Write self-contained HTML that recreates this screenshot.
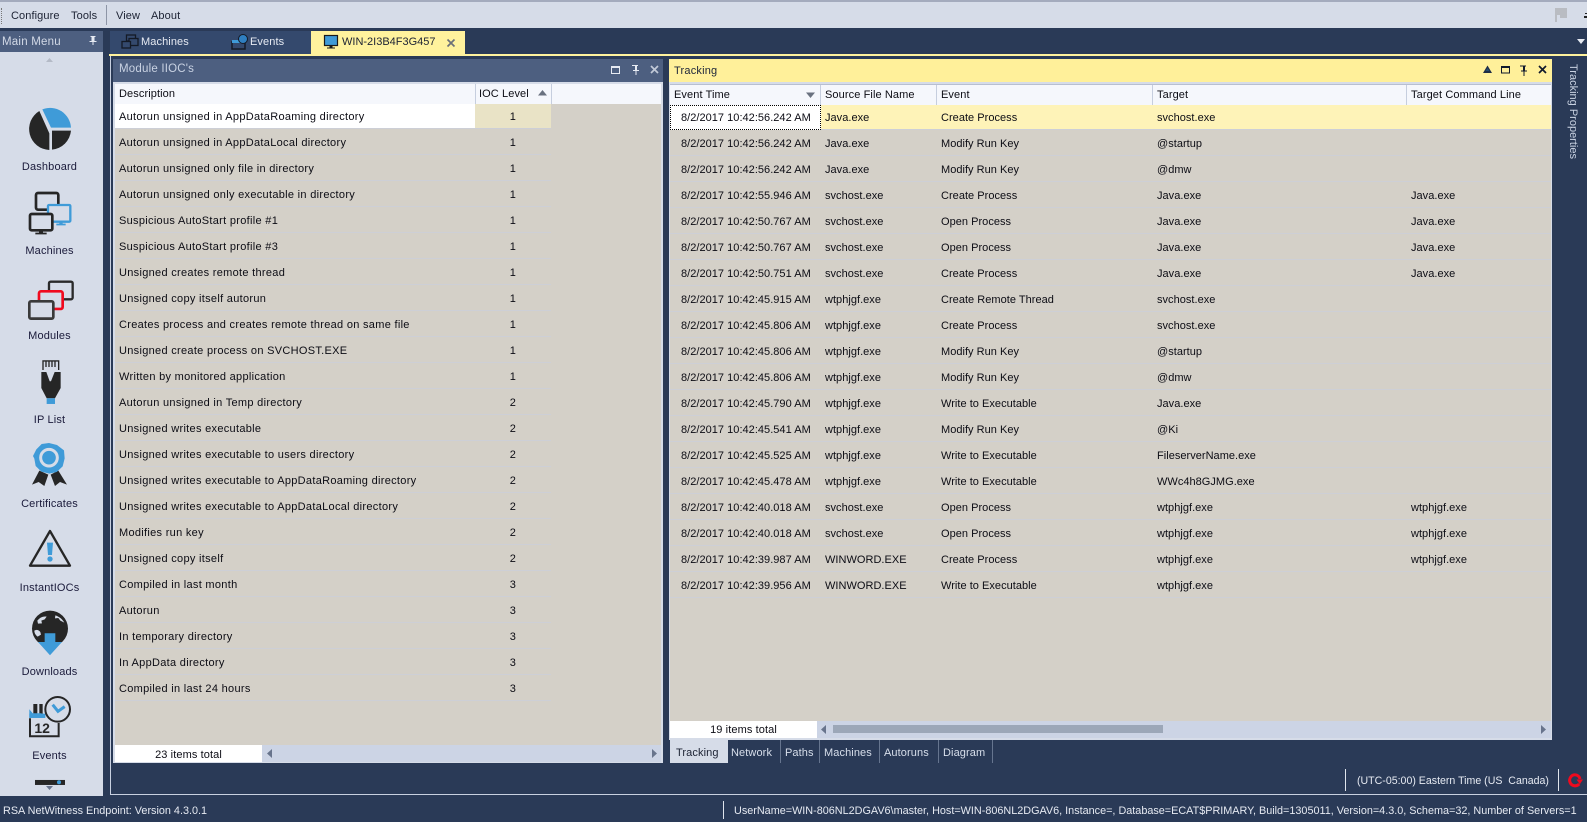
<!DOCTYPE html>
<html><head><meta charset="utf-8"><style>
html,body{margin:0;padding:0;width:1587px;height:822px;overflow:hidden;background:#2a3a57}
body{position:relative;font:11px "Liberation Sans",sans-serif;letter-spacing:.1px;color:#0c0c14}
.a,.a *{box-sizing:border-box}
.a{position:absolute;white-space:nowrap}
.wt{color:#e6eaf2}
.r{position:relative;height:26px;line-height:25px;border-bottom:1px solid #cdcfd6;white-space:nowrap}
.r span{position:absolute;top:2px}
.r:first-child span{top:1px}
.l{letter-spacing:.3px}
.t{letter-spacing:.03px}
.l .r{width:436px}
.l .d{left:4px}
.l .n{left:360px;width:76px;text-align:center}
.t .r span:nth-child(1){left:11px}
.t .r span:nth-child(2){left:155px}
.t .r span:nth-child(3){left:271px}
.t .r span:nth-child(4){left:487px}
.t .r span:nth-child(5){left:741px}
.h{position:absolute;background:#f5f7fc;border-bottom:2px solid #c6cede;height:21px;line-height:18px}
.h i{position:absolute;top:0;bottom:0;width:1px;background:#c6cede}
.h b{font-weight:normal;position:absolute;top:2px}
.sl{position:absolute;left:0;width:99px;text-align:center;color:#1a1a3a;letter-spacing:.15px}
.bt{position:absolute;top:742px;height:23px;line-height:22px;color:#d8dfeb}
.bs{position:absolute;top:740px;height:23px;width:1px;background:#66758f}
</style></head><body>

<!-- menu bar -->
<div class="a" style="left:0;top:0;width:1587px;height:28px;background:#d6dce8;border-top:2px solid #a4abbd"></div>
<div class="a" style="left:1px;top:8px;height:16px;border-left:1px dotted #777"></div>
<div class="a" style="left:11px;top:10px;color:#1c2233">Configure</div>
<div class="a" style="left:71px;top:10px;color:#1c2233">Tools</div>
<div class="a" style="left:106px;top:5px;width:1px;height:20px;background:#8d95a6"></div>
<div class="a" style="left:116px;top:10px;color:#1c2233">View</div>
<div class="a" style="left:151px;top:10px;color:#1c2233">About</div>
<svg class="a" style="left:1552px;top:6px" width="35" height="18"><path d="M3 2h2v14H3zM5 2h10v10H8V9H5z" fill="#b9bcc2"/><path d="M33 7h2v1h-2zM32 10h3v2h-3z" fill="#222"/></svg>

<!-- sidebar -->
<div class="a" style="left:0;top:31px;width:103px;height:21px;background:#4d5f80;color:#d2d9e6;line-height:22px;padding-left:2px;font-size:11.500px;letter-spacing:.22px">Main Menu</div>
<svg class="a" style="left:88px;top:35px" width="10" height="11"><path d="M2.500 1h5v1h-1v4h2v1H5.500v3h-1V7H1.500V6h2V2h-1z" fill="#e6eaf2"/></svg>
<div class="a" style="left:0;top:52px;width:103px;height:744px;background:#d6dce8"></div>
<svg class="a" style="left:0;top:0" width="103" height="796" viewBox="0 0 103 796">
<path d="M46 62h7l-3.500-4z" fill="#b4bac6"/>
<path d="M46 786h7l-3.500 4z" fill="#68748c"/>
<g transform="translate(0,90) scale(.3333)">
 <path d="M118 63L148 130V180A63 63 0 0 1 118 63Z" fill="#262626"/>
 <path d="M127 58A63 63 0 0 1 213 113H153Z" fill="#3f9bd8"/>
 <path d="M156 122H213A63 63 0 0 1 156 179Z" fill="#262626"/>
 <rect x="108" y="309" width="67" height="50" rx="6" fill="none" stroke="#262626" stroke-width="8"/>
 <rect x="144" y="345" width="67" height="50" rx="3" fill="#d6dce8" stroke="#3f9bd8" stroke-width="7"/>
 <path d="M178 395h10v6h9v5h-28v-5h9z" fill="#3f9bd8"/>
 <rect x="90" y="372" width="67" height="49" rx="5" fill="#d6dce8" stroke="#262626" stroke-width="8"/>
 <path d="M117 422h12v6h11v5h-34v-5h11z" fill="#262626"/>
 <rect x="147" y="575" width="71" height="53" rx="5" fill="none" stroke="#2a2a2a" stroke-width="7"/>
 <rect x="117" y="604" width="71" height="53" rx="6" fill="#d6dce8" stroke="#f00a1e" stroke-width="8"/>
 <rect x="88" y="634" width="72" height="52" rx="5" fill="#d6dce8" stroke="#3a3a3a" stroke-width="8"/>
 <path d="M129 840V813h47v27M138 813v18M147 813v18M156 813v18M165 813v18" fill="none" stroke="#262626" stroke-width="4"/>
 <path d="M124 846h15l10 28 4 0 11-28h18v48l-17 31h-25l-16-31z" fill="#262626"/>
 <rect x="140" y="925" width="25" height="17" fill="#3f9bd8"/>
</g>
<g transform="translate(0,420) scale(.3333)">
 <path d="M118 152L96 194l20-8 17 12 12-34zM175 152l26 42-21-8-15 12-13-34z" fill="#262626"/>
 <path d="M125 72l22 -3 24 6 21 16 2 24-6 24-18 17-22 5-24-6-17-17-4-22-4-8 10-20z" fill="#3f9bd8"/>
 <circle cx="147" cy="113" r="25" fill="#3f9bd8" stroke="#d6dce8" stroke-width="9"/>
 <path d="M150 333L210 437H90Z" fill="none" stroke="#262626" stroke-width="7" stroke-linejoin="round"/>
 <path d="M141 368h18l-3 37h-12z" fill="#3f9bd8"/><circle cx="150" cy="417" r="8" fill="#3f9bd8"/>
 <circle cx="150" cy="626" r="54" fill="#262626"/>
 <path d="M112 602c8-10 18-14 28-12l-6 8-10 4 2 8-12 1zM166 586c12 4 22 12 27 22l-12-6-6-8-10 1zM103 632c6-4 12-3 18 4l2 8-10 6c-7-5-10-11-10-18z" fill="#d6dce8"/>
 <path d="M134 640h32v26h20l-36 40-36-40h20z" fill="#3f9bd8"/>
 <path d="M100 852h12v30h-12zM118 852h10v30h-10z" fill="#262626"/>
 <path d="M88 893V868l10 12h26l10 13z" fill="#3f9bd8"/>
 <path d="M90 895v54h86v-40" fill="none" stroke="#262626" stroke-width="6"/>
 <rect x="88" y="881" width="48" height="13" fill="#3f9bd8"/>
 <text x="103" y="939" font-family="Liberation Sans,sans-serif" font-size="42" font-weight="bold" fill="#262626" letter-spacing="0">12</text>
 <circle cx="173" cy="868" r="37" fill="#d6dce8" stroke="#262626" stroke-width="6"/>
 <path d="M158 854L174 874L194 860" fill="none" stroke="#3f9bd8" stroke-width="9"/>
 <rect x="105" y="1080" width="90" height="15" fill="#262626"/>
 <circle cx="177" cy="1087" r="6" fill="#3f9bd8"/>
</g>
</svg>
<div class="sl" style="top:161px">Dashboard</div>
<div class="sl" style="top:245px">Machines</div>
<div class="sl" style="top:330px">Modules</div>
<div class="sl" style="top:414px">IP List</div>
<div class="sl" style="top:498px">Certificates</div>
<div class="sl" style="top:582px">InstantIOCs</div>
<div class="sl" style="top:666px">Downloads</div>
<div class="sl" style="top:750px">Events</div>

<!-- doc tabs -->
<div class="a" style="left:110px;top:31px;width:201px;height:23px;background:#34496d"></div>
<svg class="a" style="left:121px;top:34px" width="18" height="16"><g fill="none" stroke="#141a26" stroke-width="1.300"><rect x="5.500" y="1" width="9" height="6"/><rect x="8" y="4.500" width="9" height="7" fill="#34496d"/><rect x="1" y="7.500" width="8.500" height="6.500" fill="#34496d"/></g></svg>
<div class="a wt" style="left:141px;top:36px">Machines</div>
<svg class="a" style="left:231px;top:34px" width="18" height="16"><rect x="1" y="8" width="13" height="7" fill="none" stroke="#141a26" stroke-width="1.500"/><rect x="1" y="6" width="8" height="3" fill="#3f9bd8"/><circle cx="12" cy="5" r="4.500" fill="#2f7fc0" stroke="#141a26"/></svg>
<div class="a wt" style="left:250px;top:36px">Events</div>
<div class="a" style="left:311px;top:31px;width:154px;height:23px;background:#fff29d"></div>
<svg class="a" style="left:323px;top:34px" width="16" height="16"><rect x="1.500" y="1.500" width="13" height="10" fill="#3f9bd8" stroke="#1a1a1a" stroke-width="1.200"/><path d="M6.500 12h3v1.500h2.500v1H4v-1h2.500z" fill="#1a1a1a"/></svg>
<div class="a" style="left:342px;top:36px;color:#1c2233;letter-spacing:0">WIN-2I3B4F3G457</div>
<svg class="a" style="left:446px;top:38px" width="11" height="11"><path d="M1.500 1.500l7 7M8.500 1.500l-7 7" stroke="#6c7078" stroke-width="1.700"/></svg>
<div class="a" style="left:109px;top:54px;width:1478px;height:2px;background:#fff29d"></div>
<svg class="a" style="left:1576px;top:38px" width="10" height="8"><path d="M1 1h8L5 6z" fill="#e6eaf2"/></svg>

<!-- Module IIOC panel -->
<div class="a" style="left:113px;top:59px;width:550px;height:704px;background:#d6dce8"></div>
<div class="a" style="left:113px;top:59px;width:550px;height:23px;background:#4d5f80;color:#c9d2e2;line-height:21px;padding-left:6px;font-size:11.500px;letter-spacing:.2px">Module IIOC's</div>
<svg class="a" style="left:608px;top:60px" width="52" height="20"><rect x="3.500" y="6.500" width="8" height="7" fill="none" stroke="#e6eaf2"/><rect x="3" y="6" width="9" height="2" fill="#e6eaf2"/><path d="M24 5h6v1h-1v4h2v1h-2.500v4h-1v-4H25v-1h2V6h-3z" fill="#e6eaf2"/><path d="M43 6l7 7M50 6l-7 7" stroke="#c2cad8" stroke-width="1.700"/></svg>
<div class="h" style="left:115px;top:84px;width:546px;height:20px;line-height:17px">
 <b style="left:4px">Description</b><i style="left:360px"></i><b style="left:364px">IOC Level</b><i style="left:436px"></i>
 <svg style="position:absolute;left:423px;top:5px" width="10" height="7"><path d="M0 6.500h9L4.500 1z" fill="#6a7280"/></svg>
</div>
<div class="a l" style="left:115px;top:104px;width:546px;height:641px;background:#d4d0c8">
<div class="r" style="height:25px;background:linear-gradient(90deg,#fff 360px,#e9e3c6 360px)"><span class="d">Autorun unsigned in AppDataRoaming directory</span><span class="n">1</span></div>
<div class="r"><span class="d">Autorun unsigned in AppDataLocal directory</span><span class="n">1</span></div>
<div class="r"><span class="d">Autorun unsigned only file in directory</span><span class="n">1</span></div>
<div class="r"><span class="d">Autorun unsigned only executable in directory</span><span class="n">1</span></div>
<div class="r"><span class="d">Suspicious AutoStart profile #1</span><span class="n">1</span></div>
<div class="r"><span class="d">Suspicious AutoStart profile #3</span><span class="n">1</span></div>
<div class="r"><span class="d">Unsigned creates remote thread</span><span class="n">1</span></div>
<div class="r"><span class="d">Unsigned copy itself autorun</span><span class="n">1</span></div>
<div class="r"><span class="d">Creates process and creates remote thread on same file</span><span class="n">1</span></div>
<div class="r"><span class="d">Unsigned create process on SVCHOST.EXE</span><span class="n">1</span></div>
<div class="r"><span class="d">Written by monitored application</span><span class="n">1</span></div>
<div class="r"><span class="d">Autorun unsigned in Temp directory</span><span class="n">2</span></div>
<div class="r"><span class="d">Unsigned writes executable</span><span class="n">2</span></div>
<div class="r"><span class="d">Unsigned writes executable to users directory</span><span class="n">2</span></div>
<div class="r"><span class="d">Unsigned writes executable to AppDataRoaming directory</span><span class="n">2</span></div>
<div class="r"><span class="d">Unsigned writes executable to AppDataLocal directory</span><span class="n">2</span></div>
<div class="r"><span class="d">Modifies run key</span><span class="n">2</span></div>
<div class="r"><span class="d">Unsigned copy itself</span><span class="n">2</span></div>
<div class="r"><span class="d">Compiled in last month</span><span class="n">3</span></div>
<div class="r"><span class="d">Autorun</span><span class="n">3</span></div>
<div class="r"><span class="d">In temporary directory</span><span class="n">3</span></div>
<div class="r"><span class="d">In AppData directory</span><span class="n">3</span></div>
<div class="r"><span class="d">Compiled in last 24 hours</span><span class="n">3</span></div>
</div>
<div class="a" style="left:115px;top:745px;width:147px;height:17px;background:#fff;text-align:center;line-height:20px">23 items total</div>
<div class="a" style="left:262px;top:745px;width:399px;height:17px;background:#ccd4e5"></div>
<svg class="a" style="left:266px;top:748px" width="392" height="11"><path d="M6 1v9L1 5.500z" fill="#68748c"/><path d="M386 1v9l5-4.500z" fill="#68748c"/></svg>

<!-- Tracking panel -->
<div class="a" style="left:669px;top:59px;width:883px;height:681px;background:#d6dce8"></div>
<div class="a" style="left:669px;top:59px;width:883px;height:23px;background:#fff09a;color:#20283c;line-height:25px;padding-left:5px;letter-spacing:.2px">Tracking</div>
<svg class="a" style="left:1480px;top:62px" width="70" height="16"><path d="M3 11h9L7.500 3.500z" fill="#1f2d46"/><path d="M5.500 9h4L7.500 6z" fill="#234c70"/><rect x="21.500" y="4.500" width="8" height="6.500" fill="none" stroke="#111a2c"/><rect x="21" y="4" width="9" height="2" fill="#111a2c"/><path d="M40 3.500h6v1h-1v4h2v1h-2.500V14h-1V9.500H41v-1h2v-4h-3z" fill="#111a2c"/><path d="M59 4l7 7M66 4l-7 7" stroke="#111a2c" stroke-width="1.700"/></svg>
<div class="h" style="left:670px;top:84px;width:881px;border-top:1px solid #b8bfd0;line-height:17px">
 <b style="left:4px">Event Time</b><i style="left:150px"></i>
 <svg style="position:absolute;left:136px;top:7px" width="10" height="7"><path d="M0 .5h9L4.500 6z" fill="#6a7280"/></svg>
 <b style="left:155px">Source File Name</b><i style="left:266px"></i>
 <b style="left:271px">Event</b><i style="left:482px"></i>
 <b style="left:487px">Target</b><i style="left:736px"></i>
 <b style="left:741px">Target Command Line</b>
</div>
<div class="a t" style="left:670px;top:105px;width:881px;height:616px;background:#d4d0c8">
<div class="r" style="background:#fef3b8;height:25px"><span>&nbsp;</span><span>Java.exe</span><span>Create Process</span><span>svchost.exe</span><span></span></div>
<div class="r"><span>8/2/2017 10:42:56.242 AM</span><span>Java.exe</span><span>Modify Run Key</span><span>@startup</span><span></span></div>
<div class="r"><span>8/2/2017 10:42:56.242 AM</span><span>Java.exe</span><span>Modify Run Key</span><span>@dmw</span><span></span></div>
<div class="r"><span>8/2/2017 10:42:55.946 AM</span><span>svchost.exe</span><span>Create Process</span><span>Java.exe</span><span>Java.exe</span></div>
<div class="r"><span>8/2/2017 10:42:50.767 AM</span><span>svchost.exe</span><span>Open Process</span><span>Java.exe</span><span>Java.exe</span></div>
<div class="r"><span>8/2/2017 10:42:50.767 AM</span><span>svchost.exe</span><span>Open Process</span><span>Java.exe</span><span>Java.exe</span></div>
<div class="r"><span>8/2/2017 10:42:50.751 AM</span><span>svchost.exe</span><span>Create Process</span><span>Java.exe</span><span>Java.exe</span></div>
<div class="r"><span>8/2/2017 10:42:45.915 AM</span><span>wtphjgf.exe</span><span>Create Remote Thread</span><span>svchost.exe</span><span></span></div>
<div class="r"><span>8/2/2017 10:42:45.806 AM</span><span>wtphjgf.exe</span><span>Create Process</span><span>svchost.exe</span><span></span></div>
<div class="r"><span>8/2/2017 10:42:45.806 AM</span><span>wtphjgf.exe</span><span>Modify Run Key</span><span>@startup</span><span></span></div>
<div class="r"><span>8/2/2017 10:42:45.806 AM</span><span>wtphjgf.exe</span><span>Modify Run Key</span><span>@dmw</span><span></span></div>
<div class="r"><span>8/2/2017 10:42:45.790 AM</span><span>wtphjgf.exe</span><span>Write to Executable</span><span>Java.exe</span><span></span></div>
<div class="r"><span>8/2/2017 10:42:45.541 AM</span><span>wtphjgf.exe</span><span>Modify Run Key</span><span>@Ki</span><span></span></div>
<div class="r"><span>8/2/2017 10:42:45.525 AM</span><span>wtphjgf.exe</span><span>Write to Executable</span><span>FileserverName.exe</span><span></span></div>
<div class="r"><span>8/2/2017 10:42:45.478 AM</span><span>wtphjgf.exe</span><span>Write to Executable</span><span>WWc4h8GJMG.exe</span><span></span></div>
<div class="r"><span>8/2/2017 10:42:40.018 AM</span><span>svchost.exe</span><span>Open Process</span><span>wtphjgf.exe</span><span>wtphjgf.exe</span></div>
<div class="r"><span>8/2/2017 10:42:40.018 AM</span><span>svchost.exe</span><span>Open Process</span><span>wtphjgf.exe</span><span>wtphjgf.exe</span></div>
<div class="r"><span>8/2/2017 10:42:39.987 AM</span><span>WINWORD.EXE</span><span>Create Process</span><span>wtphjgf.exe</span><span>wtphjgf.exe</span></div>
<div class="r"><span>8/2/2017 10:42:39.956 AM</span><span>WINWORD.EXE</span><span>Write to Executable</span><span>wtphjgf.exe</span><span></span></div>
</div>
<div class="a" style="left:670px;top:105px;width:151px;height:25px;background:#fff;border:1px dotted #000;line-height:25px;padding-left:10px;letter-spacing:.03px">8/2/2017 10:42:56.242 AM</div>
<div class="a" style="left:670px;top:721px;width:147px;height:17px;background:#fff;text-align:center;line-height:19px">19 items total</div>
<div class="a" style="left:817px;top:721px;width:734px;height:17px;background:#ccd4e5"></div>
<div class="a" style="left:833px;top:725px;width:330px;height:8px;background:#9ca7b8"></div>
<svg class="a" style="left:820px;top:724px" width="728" height="11"><path d="M6 1v9L1 5.500z" fill="#68748c"/><path d="M721 1v9l5-4.500z" fill="#68748c"/></svg>

<!-- bottom tabs -->
<div class="a" style="left:670px;top:740px;width:58px;height:23px;background:#d6dce8"></div>
<div class="bt" style="left:676px;color:#1c2233">Tracking</div>
<div class="bt" style="left:731px">Network</div><div class="bs" style="left:780px"></div>
<div class="bt" style="left:785px">Paths</div><div class="bs" style="left:819px"></div>
<div class="bt" style="left:824px">Machines</div><div class="bs" style="left:879px"></div>
<div class="bt" style="left:884px">Autoruns</div><div class="bs" style="left:938px"></div>
<div class="bt" style="left:943px">Diagram</div><div class="bs" style="left:992px"></div>

<!-- tracking properties -->
<div class="a" style="left:1567px;top:64px;color:#c9d2e2;writing-mode:vertical-rl;letter-spacing:0">Tracking Properties</div>

<!-- timezone / bottom -->
<div class="a" style="left:1345px;top:769px;width:1px;height:22px;background:#dfe4ec"></div>
<div class="a wt" style="left:1357px;top:775px;font-size:10.600px;letter-spacing:0">(UTC-05:00) Eastern Time (US&nbsp; Canada)</div>
<div class="a" style="left:1558px;top:769px;width:1px;height:22px;background:#dfe4ec"></div>
<svg class="a" style="left:1566px;top:772px" width="17" height="17"><path d="M9 2.800A5.500 5.500 0 1 0 13.200 12" fill="none" stroke="#f00a1e" stroke-width="3"/><path d="M9 2.800A5.500 5.500 0 0 1 14 7" fill="none" stroke="#f00a1e" stroke-width="3"/><path d="M10.500 7.500h6.500l-3.200 4.800z" fill="#f00a1e"/></svg>
<div class="a" style="left:110px;top:794px;width:1477px;height:1px;background:#c8d0e0"></div>
<div class="a" style="left:110px;top:56px;width:1px;height:738px;background:#c8d0e0"></div>
<div class="a wt" style="left:3px;top:805px;font-size:10.840px;letter-spacing:0">RSA NetWitness Endpoint: Version 4.3.0.1</div>
<div class="a" style="left:723px;top:801px;width:1px;height:18px;background:#dfe4ec"></div>
<div class="a wt" style="left:734px;top:805px;font-size:10.840px;letter-spacing:0">UserName=WIN-806NL2DGAV6\master, Host=WIN-806NL2DGAV6, Instance=, Database=ECAT$PRIMARY, Build=1305011, Version=4.3.0, Schema=32, Number of Servers=1</div>
</body></html>
